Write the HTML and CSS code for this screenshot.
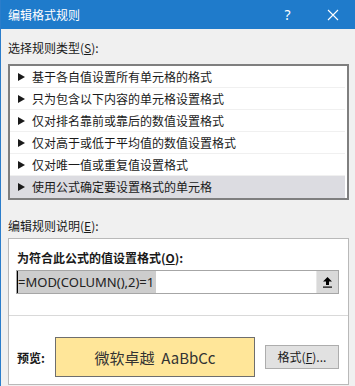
FILE: index.html
```html
<!DOCTYPE html>
<html lang="zh-CN">
<head>
    <meta charset="UTF-8">
    <title>编辑格式规则</title>
    <link rel="stylesheet" href="styles.css">
</head>
<body>
    <div class="window">
        <div class="titlebar">
            <div class="title">编辑格式规则</div>
            <div class="title-btn help">?</div>
            <div class="title-btn close">
                <svg width="12" height="12" viewBox="0 0 12 12"><path d="M1 1 L11 11 M11 1 L1 11" stroke="#fff" stroke-width="1.1" fill="none"/></svg>
            </div>
        </div>

        <div class="content">
            <div class="label">选择规则类型(<u>S</u>):</div>
            <div class="rule-list">
                <div class="rule"><span class="arrow"></span>基于各自值设置所有单元格的格式</div>
                <div class="rule"><span class="arrow"></span>只为包含以下内容的单元格设置格式</div>
                <div class="rule"><span class="arrow"></span>仅对排名靠前或靠后的数值设置格式</div>
                <div class="rule"><span class="arrow"></span>仅对高于或低于平均值的数值设置格式</div>
                <div class="rule"><span class="arrow"></span>仅对唯一值或重复值设置格式</div>
                <div class="rule selected"><span class="arrow"></span>使用公式确定要设置格式的单元格</div>
            </div>

            <div class="label label-second">编辑规则说明(<u>E</u>):</div>
            <div class="desc-box">
                <div class="desc-top">
                    <div class="bold-label">为符合此公式的值设置格式(<u>O</u>):</div>
                    <div class="formula">
                        <div class="formula-text"><span class="caret"></span><span class="sel">=MOD(COLUMN(),2)=1</span></div>
                        <div class="ref-btn">
                            <svg width="11" height="12" viewBox="0 0 11 12"><path d="M5.5 1 L10 5.5 L7 5.5 L7 9 L4 9 L4 5.5 L1 5.5 Z" fill="#000"/><rect x="1" y="10.5" width="9" height="1.2" fill="#000"/></svg>
                        </div>
                    </div>
                </div>
                <div class="desc-bottom">
                    <div class="bold-label">预览:</div>
                    <div class="preview">微软卓越&nbsp; AaBbCc</div>
                    <div class="format-btn">格式(<u>F</u>)...</div>
                </div>
            </div>
        </div>
    </div>
</body>
</html>
```

FILE: styles.css
```css
body, html {
    margin: 0;
    padding: 0;
    width: 100%;
    height: 100%;
    overflow: hidden;
    font-family: "Noto Sans CJK SC", "Noto Sans", sans-serif;
    font-size: 12px;
    color: #1a1a1a;
    background: #f0f0f0;
}

.window {
    height: 386px;
    border-left: 1px solid #2b7dcb;
    box-sizing: border-box;
}

.titlebar {
    height: 29px;
    background: #1f7bcb;
    display: flex;
    align-items: center;
    color: #fff;
}

.title {
    flex: 1;
    padding-left: 7px;
    font-size: 12px;
    line-height: 16px;
}

.title-btn {
    width: 45px;
    height: 29px;
    display: flex;
    align-items: center;
    justify-content: center;
}

.help {
    font-family: "Noto Sans", sans-serif;
    font-size: 14px;
    margin-right: 0;
}

.close {
    margin-right: 0;
}

.content {
    padding: 0 6px 0 7px;
}

.label {
    line-height: 17px;
    padding-top: 10px;
    margin-bottom: 8px;
}

.label-second {
    padding-top: 17px;
    margin-bottom: 4px;
}

.rule-list {
    border: 2px solid #7f7f7f;
    background: #fff;
}

.rule {
    height: 22px;
    line-height: 22px;
    display: flex;
    align-items: center;
    padding-left: 8px;
    border-bottom: 1px solid #f0f0f0;
    box-sizing: border-box;
    margin-right: 2px;
}

.rule:last-child {
    border-bottom: none;
}

.rule.selected {
    background: #dcdce1;
}

.arrow {
    width: 0;
    height: 0;
    border-left: 7px solid #1a1a1a;
    border-top: 4px solid transparent;
    border-bottom: 4px solid transparent;
    margin-right: 7px;
}

.desc-box {
    border: 1px solid #b9b9b9;
    background: #fff;
    height: 147px;
    box-sizing: border-box;
}

.desc-top {
    padding: 10px 9px 0 7px;
    height: 77px;
    box-sizing: border-box;
    border-bottom: 1px solid #d9d9d9;
}

.bold-label {
    font-weight: bold;
    line-height: 17px;
    padding-left: 1px;
}

.formula {
    margin-top: 4px;
    height: 24px;
    border: 1px solid #a6a6a6;
    box-sizing: border-box;
    display: flex;
    align-items: stretch;
}

.formula-text {
    flex: 1;
    display: flex;
    align-items: stretch;
}

.caret {
    width: 1px;
    background: #000;
}

.sel {
    background: #cdcdcd;
    font-family: "Noto Sans", sans-serif;
    font-size: 13px;
    line-height: 22px;
    color: #222;
    padding-right: 2px;
}

.ref-btn {
    width: 21px;
    background: #d9d9d9;
    border-left: 1px solid #e8e8e8;
    display: flex;
    align-items: center;
    justify-content: center;
}

.desc-bottom {
    display: flex;
    align-items: center;
    padding: 21px 0 0 7px;
}

.desc-bottom .bold-label {
    width: 38px;
}

.preview {
    width: 200px;
    height: 40px;
    box-sizing: border-box;
    border: 1px solid #6e6e6e;
    background: #ffe699;
    display: flex;
    align-items: center;
    justify-content: center;
    font-size: 15px;
    color: #333;
}

.format-btn {
    margin-left: 10px;
    width: 74px;
    height: 24px;
    box-sizing: border-box;
    border: 1px solid #adadad;
    background: #e1e1e1;
    display: flex;
    align-items: center;
    justify-content: center;
    line-height: 16px;
}
```
